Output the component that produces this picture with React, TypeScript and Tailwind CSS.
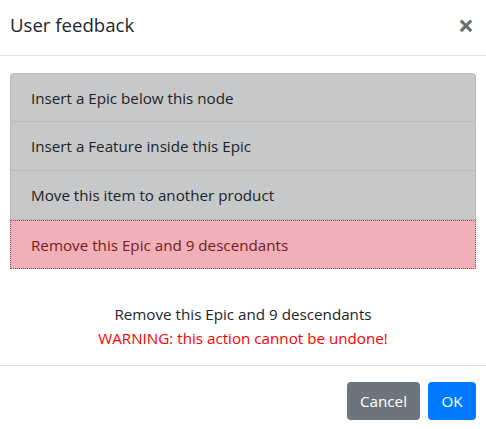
const FONT = "font-['Segoe_UI','Open_Sans',sans-serif]";

const ITEMS = [
  "Insert a Epic below this node",
  "Insert a Feature inside this Epic",
  "Move this item to another product",
];

export default function App() {
  return (
    <div className={`w-[486px] h-[429px] bg-white text-[#212529] ${FONT}`}>
      {/* Header */}
      <div className="flex h-[56px] items-center justify-between border-b border-[#dee2e6] pb-[6px] pl-[10px] pr-[12px]">
        <h5 className="text-[18.6px] leading-[1.5]">User feedback</h5>
        <span className="text-[28px] font-bold leading-none text-[#6d6d6d]">×</span>
      </div>

      {/* Body */}
      <div className="px-[10px] pt-[17px]">
        <div className="flex flex-col">
          {ITEMS.map((t, i) => (
            <div
              key={t}
              className={`h-[49px] border border-[#b7b9bb] bg-[#c6c8ca] px-[20px] pt-[12px] text-[15.2px] leading-[24px] text-[#1f2326] ${
                i === 0 ? "rounded-t-[4px]" : "border-t-0"
              }`}
            >
              {t}
            </div>
          ))}
          <div className="h-[49px] border border-dotted border-[#7a5a5e] bg-[#f1b0b7] px-[20px] pt-[12px] text-[15.2px] leading-[24px] text-[#721c24]">
            Remove this Epic and 9 descendants
          </div>
        </div>

        <div className="mt-[33px] flex flex-col items-center text-[15.2px] leading-[24px]">
          <span>Remove this Epic and 9 descendants</span>
          <span className="text-[#ff0000]">WARNING: this action cannot be undone!</span>
        </div>
      </div>

      {/* Footer */}
      <div className="mt-[15px] flex justify-end gap-[8px] border-t border-[#dee2e6] px-[10px] pt-[16px]">
        <button className="h-[38px] w-[73px] rounded-[4px] bg-[#6c757d] text-[15.2px] text-white">Cancel</button>
        <button className="h-[38px] w-[48px] rounded-[4px] bg-[#007bff] text-[15.2px] text-white">OK</button>
      </div>
    </div>
  );
}
